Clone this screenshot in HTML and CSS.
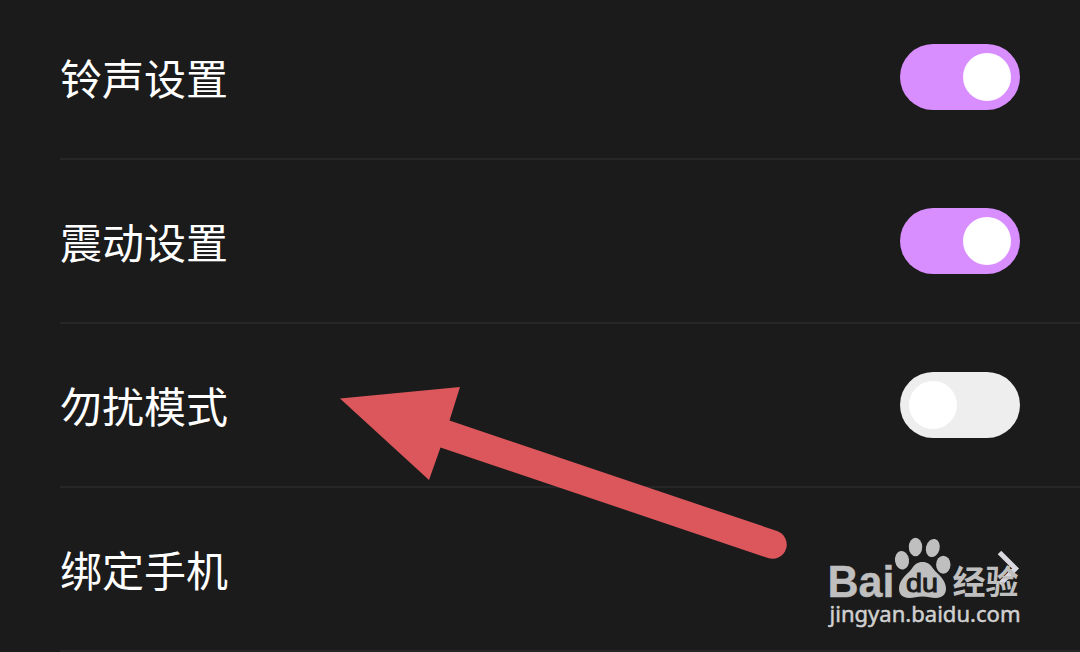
FILE: index.html
```
<!DOCTYPE html>
<html lang="zh-CN">
<head>
    <meta charset="UTF-8">
    <title>设置</title>
    <link rel="stylesheet" href="styles.css">
</head>
<body>
    <div class="screen">
        <div class="settings-list">
            <div class="setting-row">
                <span class="setting-label">铃声设置</span>
                <div class="toggle on"><div class="knob"></div></div>
            </div>
            <div class="setting-row">
                <span class="setting-label">震动设置</span>
                <div class="toggle on"><div class="knob"></div></div>
            </div>
            <div class="setting-row">
                <span class="setting-label">勿扰模式</span>
                <div class="toggle"><div class="knob"></div></div>
            </div>
            <div class="setting-row">
                <span class="setting-label">绑定手机</span>
                <svg class="chevron" width="24" height="40" viewBox="0 0 24 40">
                    <path d="M3.500 3.500L19.500 19.500L4 35" fill="none" stroke="#d9d7df" stroke-width="5"/>
                </svg>
            </div>
        </div>

        <!-- pointer arrow -->
        <svg class="arrow" width="450" height="180" viewBox="0 0 450 180">
            <path d="M0 18.500L120 7L109.500 40.500L437 151A14 14 0 0 1 428 178L100.500 67.500L89 100Z" fill="#db575c"/>
        </svg>

        <!-- watermark -->
        <svg class="watermark" width="210" height="100" viewBox="0 0 210 100">
            <g fill="#bfbfbf">
                <text class="wm-latin" x="7.500" y="65.500" font-size="45" textLength="67" lengthAdjust="spacingAndGlyphs">Bai</text>
                <ellipse cx="82" cy="29.300" rx="7" ry="9.300" transform="rotate(-8 82 29.300)"/>
                <ellipse cx="95.500" cy="16" rx="6.700" ry="9.300"/>
                <ellipse cx="112.800" cy="17" rx="6.800" ry="9.200" transform="rotate(14 112.800 17)"/>
                <ellipse cx="123.300" cy="33.700" rx="7.200" ry="9"/>
                <path d="M102.500 31C107.500 31 110.500 33.500 113.500 38C117 43 126 48 126 57.500C126 63.500 122 67 116 67C111 67 108 65.500 102.500 65.500C97 65.500 94 67 89 67C83 67 79 63.500 79 57.500C79 48 88 43 91.500 38C94.500 33.500 97.500 31 102.500 31Z"/>
                <text class="wm-cjk" x="132.500" y="62.500" font-size="33">经验</text>
                <text class="wm-url" x="9.500" y="91" font-size="22" textLength="191" lengthAdjust="spacingAndGlyphs">jingyan.baidu.com</text>
            </g>
            <text class="wm-du" x="86" y="60.500" font-size="26" textLength="32" lengthAdjust="spacingAndGlyphs">du</text>
        </svg>
    </div>
</body>
</html>
```
FILE: styles.css
```
body {
    margin: 0;
    background: #1b1b1b;
    font-family: "Noto Sans CJK SC", sans-serif;
}
.screen {
    position: relative;
    height: 652px;
    overflow: hidden;
}
.settings-list {
    margin-top: -4px;
    padding-left: 60px;
}
.setting-row {
    display: flex;
    align-items: center;
    justify-content: space-between;
    box-sizing: border-box;
    height: 164px;
    padding-right: 60px;
    border-bottom: 2px solid #272727;
}
.setting-label {
    color: #fff;
    font-size: 42px;
    line-height: 60px;
}
.toggle {
    display: flex;
    align-items: center;
    box-sizing: border-box;
    width: 120px;
    height: 66px;
    padding: 0 9px;
    border-radius: 33px;
    background: #eee;
}
.toggle.on {
    justify-content: flex-end;
    background: #d98eff;
}
.knob {
    width: 48px;
    height: 48px;
    border-radius: 50%;
    background: #fff;
}
.arrow {
    position: absolute;
    left: 340px;
    top: 380px;
}
.watermark {
    position: absolute;
    left: 820px;
    top: 531px;
}
.wm-latin {
    font-family: "Liberation Sans", sans-serif;
    font-weight: bold;
    stroke: #bfbfbf;
    stroke-width: 0.4px;
}
.wm-cjk {
    font-family: "Noto Sans CJK SC", sans-serif;
    font-weight: bold;
}
.wm-url {
    font-family: "Noto Sans", sans-serif;
    fill: #d0d0d0;
    stroke: #d0d0d0;
    stroke-width: 0.5px;
}
.wm-du {
    font-family: "Liberation Sans", sans-serif;
    fill: #1b1b1b;
    stroke: #1b1b1b;
    stroke-width: 1px;
}
```
